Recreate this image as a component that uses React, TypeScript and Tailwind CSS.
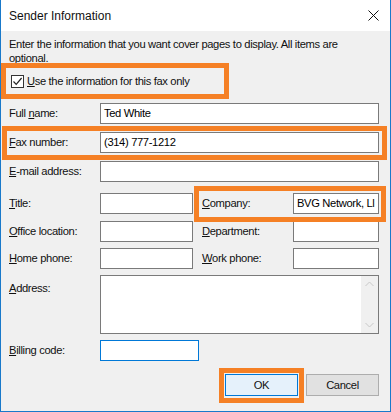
import React from "react";

const U = ({ c }: { c: string }) => <span className="underline underline-offset-[1px]">{c}</span>;

function Field({ w, children, blue }: { w: string; children?: React.ReactNode; blue?: boolean }) {
  return (
    <div
      className={`${w} h-[21px] bg-white border ${blue ? "border-[#0078d7]" : "border-[#7a7a7a]"} flex items-center px-[3px] overflow-hidden whitespace-nowrap text-black`}
    >
      {children}
    </div>
  );
}

export default function App() {
  return (
    <div
      className="relative w-[391px] h-[412px] bg-[#f0f0f0] border-x border-b border-[#1979ca] flex flex-col text-[11.2px] tracking-[-0.35px] text-[#111] overflow-hidden"
      style={{ fontFamily: '"Liberation Sans", Arial, sans-serif' }}
    >
      {/* Title bar */}
      <div className="h-[31px] bg-white flex items-center justify-between pl-[8px] pr-[10px] shrink-0">
        <span className="text-[12px] tracking-normal">Sender Information</span>
        <svg width="11" height="11" viewBox="0 0 11 11" className="mr-[1px]">
          <path d="M0.5 0.5 L10.5 10.5 M10.5 0.5 L0.5 10.5" stroke="#111" strokeWidth="1" />
        </svg>
      </div>

      <div className="flex flex-col px-[8px]">
        <p className="mt-[6px] leading-[14px] whitespace-nowrap">
          Enter the information that you want cover pages to display. All items are
          <br />
          optional.
        </p>

        {/* checkbox */}
        <div className="mt-[9px] h-[14px] flex items-center gap-[3px] pl-[2px]">
          <div className="w-[13px] h-[13px] border border-[#333] bg-white flex items-center justify-center">
            <svg width="11" height="11" viewBox="0 0 11 11">
              <path d="M1.5 5.5 L4.2 8.3 L9.6 2" fill="none" stroke="#222" strokeWidth="1.2" />
            </svg>
          </div>
          <span>
            <U c="U" />se the information for this fax only
          </span>
        </div>

        {/* Full name */}
        <div className="mt-[15px] flex items-center">
          <span className="w-[91px]">Full <U c="n" />ame:</span>
          <Field w="w-[279px]">Ted White</Field>
        </div>

        {/* Fax */}
        <div className="mt-[8px] flex items-center">
          <span className="w-[91px]"><U c="F" />ax number:</span>
          <Field w="w-[279px]">(314) 777-1212</Field>
        </div>

        {/* Email */}
        <div className="mt-[8px] flex items-center">
          <span className="w-[91px]"><U c="E" />-mail address:</span>
          <Field w="w-[279px]" />
        </div>

        {/* Title / Company */}
        <div className="mt-[11px] flex items-center">
          <span className="w-[91px]"><U c="T" />itle:</span>
          <Field w="w-[93px]" />
          <span className="ml-[9px] w-[91px]"><U c="C" />ompany:</span>
          <Field w="w-[86px]">BVG Network, Ll</Field>
        </div>

        <div className="mt-[7px] flex items-center">
          <span className="w-[91px]"><U c="O" />ffice location:</span>
          <Field w="w-[93px]" />
          <span className="ml-[9px] w-[91px]"><U c="D" />epartment:</span>
          <Field w="w-[86px]" />
        </div>

        <div className="mt-[6px] flex items-center">
          <span className="w-[91px]"><U c="H" />ome phone:</span>
          <Field w="w-[93px]" />
          <span className="ml-[9px] w-[91px]"><U c="W" />ork phone:</span>
          <Field w="w-[86px]" />
        </div>

        {/* Address */}
        <div className="mt-[6px] flex items-start">
          <span className="w-[91px] pt-[5px]"><U c="A" />ddress:</span>
          <div className="w-[279px] h-[59px] bg-white border border-[#7a7a7a] flex justify-end">
            <div className="w-[17px] h-full bg-[#f0f0f0] flex flex-col items-center justify-between py-[5px]">
              <svg width="9" height="6" viewBox="0 0 9 6">
                <path d="M0.5 5 L4.5 1 L8.5 5" fill="none" stroke="#c8c8c8" strokeWidth="1" />
              </svg>
              <svg width="9" height="6" viewBox="0 0 9 6">
                <path d="M0.5 1 L4.5 5 L8.5 1" fill="none" stroke="#c8c8c8" strokeWidth="1" />
              </svg>
            </div>
          </div>
        </div>

        {/* Billing */}
        <div className="mt-[6px] flex items-center">
          <span className="w-[91px]"><U c="B" />illing code:</span>
          <Field w="w-[99px]" blue />
        </div>

        {/* Buttons */}
        <div className="mt-[13px] flex justify-end gap-[8px] pr-[3px]">
          <button className="w-[73px] h-[22px] bg-[#e5f1fb] border border-[#0078d7] flex items-center justify-center">
            OK
          </button>
          <button className="w-[73px] h-[22px] bg-[#e1e1e1] border border-[#adadad] flex items-center justify-center">
            Cancel
          </button>
        </div>
      </div>

      {/* Orange highlight overlays */}
      <div className="absolute left-0 top-[63px] w-[228px] h-[36px] border-[5px] border-[#f58025] pointer-events-none" />
      <div className="absolute left-[1px] top-[126px] w-[385px] h-[34px] border-[5px] border-[#f58025] pointer-events-none" />
      <div className="absolute left-[193px] top-[186px] w-[192px] h-[36px] border-[5px] border-[#f58025] pointer-events-none" />
      <div className="absolute left-[218px] top-[368px] w-[85px] h-[35px] border-[5px] border-[#f58025] pointer-events-none" />
    </div>
  );
}
